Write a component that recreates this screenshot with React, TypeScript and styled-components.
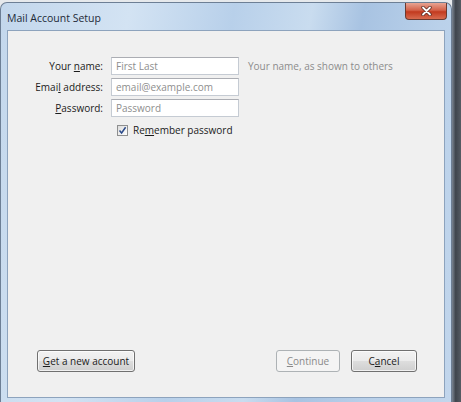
import styled, { createGlobalStyle } from 'styled-components';

const GlobalStyle = createGlobalStyle`
    html, body {
        margin: 0;
        padding: 0;
        background: #dfe5ec;
    }
`;

const App = () => {
    return (
        <>
            <GlobalStyle />
            <Screen>
                <Window>
                    <TitleBar>
                        <Title>Mail Account Setup</Title>
                        <CloseButton aria-label="Close">
                            <svg width="11" height="10" viewBox="0 0 11 10">
                                <path
                                    d="M2 1.5 L9 8.5 M9 1.5 L2 8.5"
                                    stroke="#5a2a22"
                                    strokeWidth="3.4"
                                    strokeLinecap="round"
                                />
                                <path
                                    d="M2 1.5 L9 8.5 M9 1.5 L2 8.5"
                                    stroke="#ffffff"
                                    strokeWidth="1.8"
                                    strokeLinecap="round"
                                />
                            </svg>
                        </CloseButton>
                    </TitleBar>
                    <Content>
                        <Form>
                            <Label>
                                Your <u>n</u>ame:
                            </Label>
                            <TextField placeholder="First Last" />
                            <Hint>Your name, as shown to others</Hint>

                            <Label>
                                Emai<u>l</u> address:
                            </Label>
                            <TextField placeholder="email@example.com" />
                            <span />

                            <Label>
                                <u>P</u>assword:
                            </Label>
                            <TextField placeholder="Password" type="password" />
                            <span />

                            <span />
                            <CheckRow>
                                <CheckBox>
                                    <svg width="9" height="9" viewBox="0 0 9 9">
                                        <path
                                            d="M1.5 4.5 L3.6 7 L7.6 1.2"
                                            fill="none"
                                            stroke="#2b4a8a"
                                            strokeWidth="1.5"
                                        />
                                    </svg>
                                </CheckBox>
                                <span>
                                    Re<u>m</u>ember password
                                </span>
                            </CheckRow>
                        </Form>

                        <ButtonRow>
                            <Button $width={98}>
                                <u>G</u>et a new account
                            </Button>
                            <RightButtons>
                                <Button disabled $width={64}>
                                    <u>C</u>ontinue
                                </Button>
                                <Button $width={66}>
                                    C<u>a</u>ncel
                                </Button>
                            </RightButtons>
                        </ButtonRow>
                    </Content>
                </Window>
                <DarkStrip />
            </Screen>
        </>
    );
};

export default App;

const Screen = styled.div`
    width: 461px;
    height: 402px;
    display: flex;
    overflow: hidden;
    font-family: 'Open Sans', 'Noto Sans', sans-serif;
    background: linear-gradient(to bottom, #e6e9ec, #d9dfe6);
`;

const Window = styled.div`
    width: 452px;
    margin-top: 2px;
    display: flex;
    flex-direction: column;
    padding: 0 6px 4px 6px;
    box-sizing: border-box;
    border: 1px solid #6d7f95;
    border-bottom: none;
    border-radius: 7px 7px 0 0;
    background: linear-gradient(
        100deg,
        #c3d7ec 0%,
        #d3e3f3 25%,
        #b8d0ea 45%,
        #c9dcef 60%,
        #a8c3e2 70%,
        #bad1ea 85%,
        #c2d6ec 100%
    );
`;

const TitleBar = styled.div`
    height: 27px;
    display: flex;
    align-items: flex-start;
    justify-content: space-between;
`;

const Title = styled.div`
    margin-top: 8px;
    font-size: 10.5px;
    font-weight: 500;
    color: #1e2a38;
`;

const CloseButton = styled.div`
    width: 42px;
    height: 17px;
    margin-right: -2px;
    display: flex;
    align-items: center;
    justify-content: center;
    border: 1px solid #6b3a30;
    border-top: none;
    border-radius: 0 0 4px 4px;
    background: linear-gradient(to bottom, #e8a493 0%, #d4624a 45%, #c23a1f 55%, #d86b4f 100%);
    box-sizing: border-box;
`;

const Content = styled.div`
    flex: 1;
    display: flex;
    flex-direction: column;
    justify-content: space-between;
    padding: 26px 27px 25px 29px;
    background: #f0f0f0;
    border: 1px solid #8da3bd;
`;

const Form = styled.div`
    display: grid;
    grid-template-columns: 66px 128px auto;
    column-gap: 8px;
    row-gap: 3px;
    align-items: center;
    font-size: 10px;
    font-weight: 500;
    color: #1b1b1b;
`;

const Label = styled.label`
    text-align: right;
    white-space: nowrap;
    justify-self: end;
`;

const TextField = styled.input`
    width: 128px;
    height: 18px;
    box-sizing: border-box;
    border: 1px solid #c5cbd3;
    border-top-color: #abadb3;
    background: #ffffff;
    padding: 0 4px;
    font-family: 'Open Sans', 'Noto Sans', sans-serif;
    font-size: 10px;
    outline: none;

    &::placeholder {
        color: #8e8e8e;
    }
`;

const Hint = styled.span`
    padding-left: 1px;
    color: #8c8c8c;
    white-space: nowrap;
`;

const CheckRow = styled.div`
    grid-column: 2 / 4;
    display: flex;
    align-items: center;
    gap: 5px;
    margin-top: 3px;
    padding-left: 6px;
`;

const CheckBox = styled.span`
    width: 11px;
    height: 11px;
    box-sizing: border-box;
    display: flex;
    align-items: center;
    justify-content: center;
    border: 1px solid #8e8f8f;
    background: linear-gradient(135deg, #dcdcdc, #ffffff);
`;

const ButtonRow = styled.div`
    display: flex;
    justify-content: space-between;
    align-items: center;
`;

const RightButtons = styled.div`
    display: flex;
    gap: 11px;
`;

const Button = styled.button<{ $width: number }>`
    height: 22px;
    width: ${(p) => p.$width}px;
    padding: 0;
    box-sizing: border-box;
    border: 1px solid #707070;
    border-radius: 3px;
    background: linear-gradient(to bottom, #f2f2f2 0%, #ebebeb 48%, #dddddd 52%, #cfcfcf 100%);
    box-shadow: inset 0 0 0 1px rgba(255, 255, 255, 0.7);
    font-family: 'Open Sans', 'Noto Sans', sans-serif;
    font-size: 10px;
    font-weight: 500;
    color: #1b1b1b;

    &:disabled {
        border-color: #adb2b5;
        background: #f4f4f4;
        color: #8a8a8a;
        box-shadow: none;
    }
`;

const DarkStrip = styled.div`
    flex: 1;
    background: linear-gradient(to right, #7b8592, #3f454d 40%, #555b63);
`;
